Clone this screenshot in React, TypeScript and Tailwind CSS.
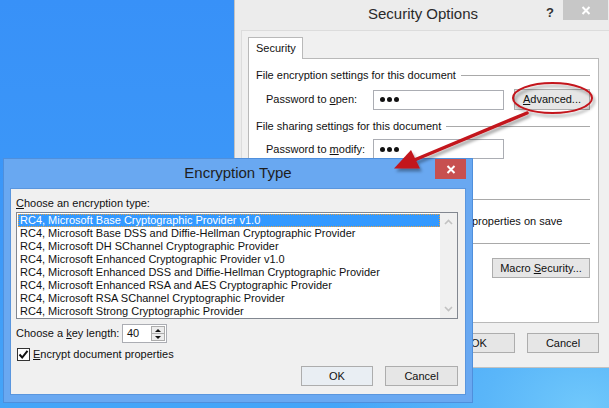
import React from "react";

const U = ({ children }: { children: React.ReactNode }) => (
  <span className="underline decoration-1 underline-offset-[1px]">{children}</span>
);

function Btn({ children, className = "" }: { children: React.ReactNode; className?: string }) {
  return (
    <div
      className={`flex items-center justify-center h-[20px] border border-[#adadad] bg-[#e6e6e6] text-[#111] ${className}`}
    >
      {children}
    </div>
  );
}

function GroupHeader({ text }: { text?: string }) {
  return (
    <div className="flex items-center h-[14px] gap-[5px]">
      {text ? <span className="whitespace-nowrap">{text}</span> : null}
      <div className="flex-1 h-px bg-[#a9a9a9]" />
    </div>
  );
}

function XGlyph({ color = "#fff" }: { color?: string }) {
  return (
    <svg width="10" height="9" viewBox="0 0 10 9">
      <path d="M1.5 1 L8.5 8 M8.5 1 L1.5 8" stroke={color} strokeWidth="2" />
    </svg>
  );
}

function Dots() {
  return (
    <div className="flex items-center gap-[2px] pl-[6px]">
      <div className="w-[5px] h-[5px] rounded-full bg-[#111]" />
      <div className="w-[5px] h-[5px] rounded-full bg-[#111]" />
      <div className="w-[5px] h-[5px] rounded-full bg-[#111]" />
    </div>
  );
}

function SecurityOptions() {
  return (
    <div className="absolute left-[234px] top-0 w-[375px] h-[368px] bg-[#ececec] border-l border-b border-[#c2c2c2] flex flex-col">
      {/* title bar */}
      <div className="relative h-[30px] flex items-center justify-center">
        <span className="text-[15px] text-[#2a2a2a] -mt-[1px] pl-[2px]">Security Options</span>
        <span className="absolute left-[311px] top-[3px] text-[13px] font-bold text-[#333]">?</span>
        <div className="absolute left-[328px] top-0 w-[45px] h-[20px] bg-[#c7c7c7] flex items-center justify-center">
          <XGlyph />
        </div>
      </div>
      {/* client */}
      <div className="ml-[6px] flex-1 bg-[#f0f0f0] border-l border-t border-[#dcdcdc] pl-[6px] pt-[6px] flex flex-col">
        <div className="flex">
          <div className="relative z-10 -mb-px h-[22px] w-[55px] bg-white border border-b-0 border-[#b9b9b9] flex items-center pl-[7px] text-[#111]">
            Security
          </div>
        </div>
        <div className="w-[351px] h-[265px] bg-white border border-[#b9b9b9] pt-[9px] pl-[7px] pr-[8px] text-[#111] flex flex-col">
          <GroupHeader text="File encryption settings for this document" />
          <div className="flex items-center mt-[7px] h-[21px]">
            <span className="w-[117px] pl-[10px] shrink-0 whitespace-nowrap">
              Password to <U>o</U>pen:
            </span>
            <div className="w-[131px] h-[20px] border border-[#abadb3] bg-white flex items-center">
              <Dots />
            </div>
            <Btn className="ml-[10px] w-[76px] h-[21px]">
              <span>
                <U>A</U>dvanced...
              </span>
            </Btn>
          </div>
          <div className="mt-[9px]">
            <GroupHeader text="File sharing settings for this document" />
          </div>
          <div className="flex items-center mt-[6px] h-[20px]">
            <span className="w-[117px] pl-[10px] shrink-0 whitespace-nowrap">
              Password to <U>m</U>odify:
            </span>
            <div className="w-[131px] h-[20px] border border-[#abadb3] bg-white flex items-center">
              <Dots />
            </div>
          </div>
          <div className="mt-[33px]">
            <GroupHeader />
          </div>
          <div className="flex items-center mt-[8px] h-[14px] pl-[10px] gap-[4px]">
            <div className="w-[13px] h-[13px] border border-[#333] bg-white" />
            <span className="whitespace-nowrap">Remove personal information from file properties on save</span>
          </div>
          <div className="mt-[8px]">
            <GroupHeader />
          </div>
          <div className="flex justify-end mt-[8px]">
            <Btn className="w-[98px]">
              <span>
                Macro <U>S</U>ecurity...
              </span>
            </Btn>
          </div>
        </div>
        <div className="flex justify-start gap-[12px] mt-[10px] pl-[195px]">
          <Btn className="w-[72px]">OK</Btn>
          <Btn className="w-[72px]">Cancel</Btn>
        </div>
      </div>
    </div>
  );
}

const items = [
  "RC4, Microsoft Base Cryptographic Provider v1.0",
  "RC4, Microsoft Base DSS and Diffie-Hellman Cryptographic Provider",
  "RC4, Microsoft DH SChannel Cryptographic Provider",
  "RC4, Microsoft Enhanced Cryptographic Provider v1.0",
  "RC4, Microsoft Enhanced DSS and Diffie-Hellman Cryptographic Provider",
  "RC4, Microsoft Enhanced RSA and AES Cryptographic Provider",
  "RC4, Microsoft RSA SChannel Cryptographic Provider",
  "RC4, Microsoft Strong Cryptographic Provider",
];

function EncryptionType() {
  return (
    <div className="absolute left-[3px] top-[158px] w-[470px] h-[245px] bg-[#69a8f1] border border-[#4f8fdc] flex flex-col px-[6px] pb-[7px]">
      <div className="relative h-[29px] flex items-center justify-center">
        <span className="text-[15px] text-[#1e1e1e] -mt-[1px]">Encryption Type</span>
        <div className="absolute left-[425px] top-0 w-[31px] h-[20px] bg-[#c75050] flex items-center justify-center">
          <XGlyph />
        </div>
      </div>
      <div className="flex-1 bg-[#f0f0f0] border border-[#5a96de] pl-[5px] pr-[7px] pt-[7px] flex flex-col text-[#111]">
        <div className="h-[14px] leading-[14px]">
          <U>C</U>hoose an encryption type:
        </div>
        <div className="mt-[2px] h-[107px] border border-[#828790] bg-white flex">
          <div className="flex-1 flex flex-col pt-px pl-px">
            {items.map((t, i) => (
              <div
                key={t}
                className={
                  i === 0
                    ? "h-[13px] leading-[11px] bg-[#3399ff] text-white border border-dotted border-[#e8a040] pl-px whitespace-nowrap"
                    : "h-[13px] leading-[13px] pl-[2px] whitespace-nowrap"
                }
              >
                {t}
              </div>
            ))}
          </div>
          <div className="w-[17px] bg-[#f0f0f0] flex flex-col justify-between items-center py-[6px]">
            <svg width="9" height="6" viewBox="0 0 9 6">
              <path d="M1 5 L4.5 1.5 L8 5" stroke="#c2c2c2" strokeWidth="1.6" fill="none" />
            </svg>
            <svg width="9" height="6" viewBox="0 0 9 6">
              <path d="M1 1 L4.5 4.5 L8 1" stroke="#c2c2c2" strokeWidth="1.6" fill="none" />
            </svg>
          </div>
        </div>
        <div className="flex items-center mt-[5px] h-[19px]">
          <span className="w-[106px] whitespace-nowrap">
            Choose a <U>k</U>ey length:
          </span>
          <div className="w-[45px] h-[19px] border border-[#abadb3] bg-white flex items-center justify-between pl-[4px] pr-px">
            <span>40</span>
            <div className="flex flex-col w-[14px] h-[15px] border border-[#acacac] bg-[#ececec]">
              <div className="flex-1 flex items-center justify-center border-b border-[#acacac]">
                <svg width="6" height="3" viewBox="0 0 6 3">
                  <path d="M0 3 L3 0 L6 3 Z" fill="#111" />
                </svg>
              </div>
              <div className="flex-1 flex items-center justify-center">
                <svg width="6" height="3" viewBox="0 0 6 3">
                  <path d="M0 0 L3 3 L6 0 Z" fill="#111" />
                </svg>
              </div>
            </div>
          </div>
        </div>
        <div className="flex items-center mt-[5px] h-[13px] gap-[3px] pl-px">
          <div className="w-[13px] h-[13px] border border-[#333] bg-white flex items-center justify-center">
            <svg width="11" height="11" viewBox="0 0 11 11">
              <path d="M1.5 5.5 L4.2 8.5 L9.5 1.8" stroke="#111" strokeWidth="2" fill="none" />
            </svg>
          </div>
          <span>
            <U>E</U>ncrypt document properties
          </span>
        </div>
        <div className="flex justify-end gap-[12px] mt-[5px]">
          <Btn className="w-[72px] border-[#3c7fcf] bg-[#e9eef3]">OK</Btn>
          <Btn className="w-[73px]">Cancel</Btn>
        </div>
      </div>
    </div>
  );
}

function Annotations() {
  return (
    <svg className="absolute inset-0 pointer-events-none" width="609" height="408" viewBox="0 0 609 408">
      <defs>
        <filter id="sh" x="-20%" y="-20%" width="140%" height="160%">
          <feDropShadow dx="2" dy="3" stdDeviation="1.6" floodColor="#000" floodOpacity="0.35" />
        </filter>
      </defs>
      <g filter="url(#sh)">
        <ellipse cx="552.5" cy="98" rx="39.5" ry="15" fill="none" stroke="#c3141c" strokeWidth="2" />
        <path d="M527 113 L412 161" stroke="#c3141c" strokeWidth="3.5" strokeLinecap="round" />
        <polygon points="394,168.5 420,168.5 411,150" fill="#c3141c" />
      </g>
    </svg>
  );
}

export default function App() {
  return (
    <div className="relative w-[609px] h-[408px] overflow-hidden font-['Liberation_Sans',Arial,sans-serif] text-[11px] bg-[radial-gradient(ellipse_at_96%_100%,#70c8fb_0%,#5ab6f9_12%,transparent_30%),linear-gradient(180deg,#3891f8_0%,#3d99f8_60%,#45a5f8_100%)]">
      <SecurityOptions />
      <EncryptionType />
      <Annotations />
    </div>
  );
}
